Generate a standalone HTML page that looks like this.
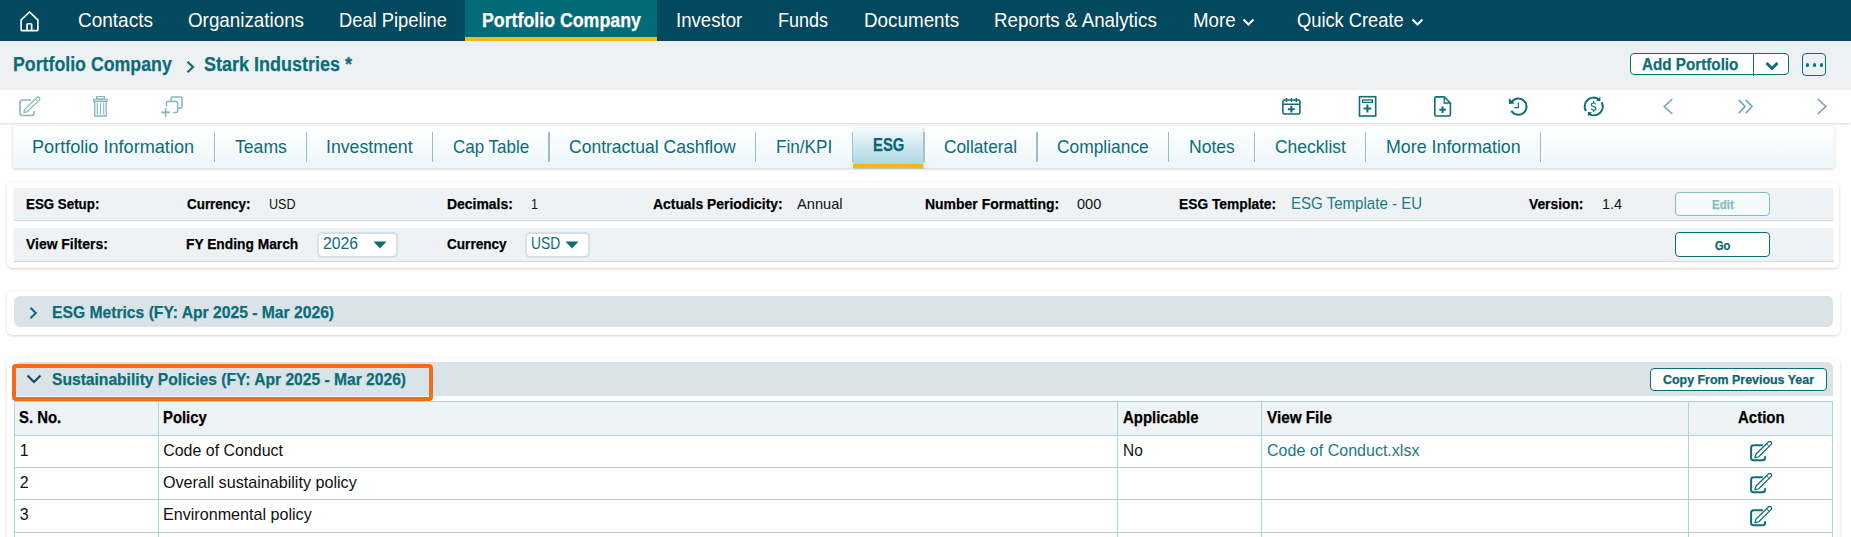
<!DOCTYPE html>
<html><head><meta charset="utf-8"><title>ESG</title>
<style>
html,body{margin:0;padding:0;}
body{width:1851px;height:537px;overflow:hidden;position:relative;background:#fff;font-family:"Liberation Sans",sans-serif;}
.t{position:absolute;white-space:nowrap;transform-origin:0 0;}
.r{position:absolute;}
</style></head><body>
<div class="r" style="left:0px;top:0px;width:1851px;height:41px;background:#02485f"></div>
<div class="r" style="left:465px;top:0px;width:192px;height:41px;background:#026b78"></div>
<div class="r" style="left:465px;top:37px;width:192px;height:5px;background:#fbb515"></div>
<svg class="r" style="left:14px;top:6px" width="32" height="30" viewBox="14 6 32 30"><path d="M29.5 12 L37.85 19.8 V29.65 Q37.85 30.65 36.85 30.65 H22.15 Q21.15 30.65 21.15 29.65 V19.8 Z" fill="none" stroke="#fff" stroke-width="1.7" stroke-linejoin="round"/><path d="M27.05 30.65 V24.75 Q27.05 23.75 28.05 23.75 H30.65 Q31.65 23.75 31.65 24.75 V30.65" fill="none" stroke="#fff" stroke-width="1.7"/></svg>
<div class="t" style="left:78.00px;top:9px;font-size:19.39px;line-height:22px;color:#fff;transform:scaleX(0.9802);">Contacts</div>
<div class="t" style="left:187.70px;top:9px;font-size:19.39px;line-height:22px;color:#fff;transform:scaleX(0.9704);">Organizations</div>
<div class="t" style="left:339.00px;top:9px;font-size:19.39px;line-height:22px;color:#fff;transform:scaleX(0.9452);">Deal Pipeline</div>
<div class="t" style="left:482.10px;top:9px;font-size:19.91px;line-height:22px;color:#fff;font-weight:700;-webkit-text-stroke:0.25px;transform:scaleX(0.8923);">Portfolio Company</div>
<div class="t" style="left:676.00px;top:9px;font-size:19.39px;line-height:22px;color:#fff;transform:scaleX(0.9613);">Investor</div>
<div class="t" style="left:778.00px;top:9px;font-size:19.39px;line-height:22px;color:#fff;transform:scaleX(0.9279);">Funds</div>
<div class="t" style="left:863.70px;top:9px;font-size:19.39px;line-height:22px;color:#fff;transform:scaleX(0.9717);">Documents</div>
<div class="t" style="left:994.30px;top:9px;font-size:19.39px;line-height:22px;color:#fff;transform:scaleX(0.9690);">Reports &amp; Analytics</div>
<div class="t" style="left:1192.60px;top:9px;font-size:19.39px;line-height:22px;color:#fff;transform:scaleX(0.9644);">More</div>
<div class="t" style="left:1297.30px;top:9px;font-size:19.39px;line-height:22px;color:#fff;transform:scaleX(0.9431);">Quick Create</div>
<svg class="r" style="left:1242.0px;top:17px" width="13" height="11" viewBox="0 0 13 11"><path d="M1.5 2.5 L6.5 7.5 L11.5 2.5" fill="none" stroke="#fff" stroke-width="2"/></svg>
<svg class="r" style="left:1411.0px;top:17px" width="13" height="11" viewBox="0 0 13 11"><path d="M1.5 2.5 L6.5 7.5 L11.5 2.5" fill="none" stroke="#fff" stroke-width="2"/></svg>
<div class="r" style="left:0px;top:41px;width:1851px;height:49px;background:#edf1f4"></div>
<div class="t" style="left:13.20px;top:53px;font-size:19.91px;line-height:22px;color:#0c6c78;font-weight:700;-webkit-text-stroke:0.25px;transform:scaleX(0.8918);">Portfolio Company</div>
<svg class="r" style="left:185px;top:60px" width="11" height="14" viewBox="0 0 11 14"><path d="M2.5 1.8 L8 7 L2.5 12.2" fill="none" stroke="#0c6c78" stroke-width="2.2"/></svg>
<div class="t" style="left:204.00px;top:53px;font-size:19.91px;line-height:22px;color:#0c6c78;font-weight:700;-webkit-text-stroke:0.25px;transform:scaleX(0.9038);">Stark Industries *</div>
<div class="r" style="left:1630px;top:53px;width:157px;height:20px;border:1.5px solid #0c6c78;border-radius:4px;background:#fff"></div>
<div class="r" style="left:1753px;top:53px;width:1.3px;height:23px;background:#0c6c78"></div>
<div class="t" style="left:1641.60px;top:55px;font-size:16.86px;line-height:19px;color:#0c6c78;font-weight:700;-webkit-text-stroke:0.25px;transform:scaleX(0.9030);">Add Portfolio</div>
<svg class="r" style="left:1764px;top:60px" width="16" height="12" viewBox="0 0 16 12"><path d="M2.5 3 L8 8.5 L13.5 3" fill="none" stroke="#0c6c78" stroke-width="3"/></svg>
<div class="r" style="left:1802px;top:53px;width:22px;height:21px;border:1.5px solid #0c6c78;border-radius:4px"></div>
<div class="r" style="left:1805.6px;top:62.8px;width:3.8px;height:3.8px;border-radius:50%;background:#0c6c78"></div>
<div class="r" style="left:1812.6px;top:62.8px;width:3.8px;height:3.8px;border-radius:50%;background:#0c6c78"></div>
<div class="r" style="left:1819.6px;top:62.8px;width:3.8px;height:3.8px;border-radius:50%;background:#0c6c78"></div>
<div class="r" style="left:0px;top:90px;width:1851px;height:33px;background:#fff;box-shadow:0 1px 2px rgba(0,0,0,0.16)"></div>
<svg class="r" style="left:0;top:90px" width="200" height="32" viewBox="0 90 200 32">
<path d="M31 100 H22.5 Q20 100 20 102.5 V113 Q20 115.5 22.5 115.5 H31.5 Q34 115.5 34 113 V111" fill="none" stroke="#86b8bd" stroke-width="1.6"/>
<path d="M23.8 112.7 L24.7 109.4 L37.1 97.5 A1.7 1.7 0 0 1 39.5 99.9 L27.1 111.8 Z" fill="none" stroke="#86b8bd" stroke-width="1.2" stroke-linejoin="round"/>
<path d="M35.3 99.3 L37.7 101.7" stroke="#86b8bd" stroke-width="1"/>
<rect x="96.6" y="96.6" width="7.8" height="2.4" fill="none" stroke="#86b8bd" stroke-width="1.2"/>
<rect x="93.8" y="99.2" width="13.4" height="2.3" fill="#c5dde0" stroke="#86b8bd" stroke-width="1.1"/>
<path d="M94.8 101.5 V116 H106.2 V101.5" fill="none" stroke="#86b8bd" stroke-width="1.3"/>
<path d="M97.3 103.2 V114.6 M100.5 103.2 V114.6 M103.7 103.2 V114.6" stroke="#86b8bd" stroke-width="1.1"/>
<path d="M171 101.5 V98.3 Q171 97 172.3 97 H180.7 Q182 97 182 98.3 V106.7 Q182 108 180.7 108 H178" fill="none" stroke="#86b8bd" stroke-width="1.5"/>
<path d="M166.5 106 V102.8 Q166.5 101.5 167.8 101.5 H176.3 Q177.6 101.5 177.6 102.8 V111.2 Q177.6 112.5 176.3 112.5 H173.3" fill="none" stroke="#86b8bd" stroke-width="1.5"/>
<path d="M165.6 108 V116.8 M161.2 112.4 H170" stroke="#86b8bd" stroke-width="1.6"/>
</svg>
<svg class="r" style="left:1270px;top:90px" width="570" height="32" viewBox="1270 90 570 32">
<rect x="1282.9" y="100" width="17" height="14" rx="1.6" fill="none" stroke="#0e6e79" stroke-width="1.6"/>
<path d="M1282.9 104.2 H1299.9 M1286.5 98 V102 M1291.4 98 V102 M1296.3 98 V102" stroke="#0e6e79" stroke-width="1.4"/>
<path d="M1291.4 105.8 V112.5 M1288 109.2 H1294.8" stroke="#0e6e79" stroke-width="1.9"/>
<rect x="1359.5" y="96.7" width="16.2" height="19.3" fill="none" stroke="#0e6e79" stroke-width="1.6"/>
<rect x="1362.6" y="100" width="9.8" height="2.4" fill="none" stroke="#0e6e79" stroke-width="1.3"/>
<path d="M1367.4 104.5 V112.5 M1363.5 108.5 H1371.3" stroke="#0e6e79" stroke-width="2"/>
<path d="M1434.8 98.3 Q1434.8 96.9 1436.2 96.9 H1444.2 L1450.4 103 V114.6 Q1450.4 116 1449 116 H1436.2 Q1434.8 116 1434.8 114.6 Z" fill="none" stroke="#0e6e79" stroke-width="1.6" stroke-linejoin="round"/>
<path d="M1444.2 96.9 V103 H1450.4" fill="none" stroke="#0e6e79" stroke-width="1.3"/>
<path d="M1442.6 106.4 V113 M1439.3 109.7 H1445.9" stroke="#0e6e79" stroke-width="1.9"/>
<path d="M1511.8 101.95 A8.1 8.1 0 1 1 1511.4 110.65" fill="none" stroke="#0e6e79" stroke-width="2"/>
<path d="M1508.9 97.9 L1508.9 103.9 L1514.6 103.4 Z" fill="#0e6e79"/>
<path d="M1518.4 102.4 V107.7 H1514.3" fill="none" stroke="#0e6e79" stroke-width="1.2"/>
<path d="M1586 111 A8.8 8.8 0 0 1 1598.5 99.2" fill="none" stroke="#0e6e79" stroke-width="2.1"/>
<path d="M1601.6 102.2 A8.8 8.8 0 0 1 1589 113.8" fill="none" stroke="#0e6e79" stroke-width="2.1"/>
<path d="M1600.3 96.8 L1600.3 101.2 L1596.2 100.8 Z" fill="#0e6e79"/>
<path d="M1587.9 111.8 L1587.9 116.2 L1592 112.6 Z" fill="#0e6e79"/>
<path d="M1595.7 104.4 Q1595.2 103 1593.6 103 Q1591.4 103 1591.4 104.8 Q1591.4 106.3 1593.6 106.6 Q1595.9 106.9 1595.9 108.4 Q1595.9 110.2 1593.6 110.2 Q1591.9 110.2 1591.3 108.8 M1593.6 101 V103 M1593.6 110.2 V112" fill="none" stroke="#0e6e79" stroke-width="1.2"/>
<path d="M1672.4 99 L1664.3 106.5 L1672.4 114" fill="none" stroke="#7ba4ae" stroke-width="1.7"/>
<path d="M1738.8 99.8 L1745 106.5 L1738.8 113.2 M1745.8 99.8 L1752 106.5 L1745.8 113.2" fill="none" stroke="#6cb2b7" stroke-width="1.8"/>
<path d="M1817.8 99 L1825.8 106.5 L1817.8 114" fill="none" stroke="#7ba4ae" stroke-width="1.7"/>
</svg>
<div class="r" style="left:13px;top:126px;width:1821px;height:42px;background:linear-gradient(#ffffff,#edf6fb);box-shadow:0 1px 3px rgba(0,0,0,0.2)"></div>
<div class="t" style="left:32.40px;top:136px;font-size:18.60px;line-height:21px;color:#0c6c78;transform:scaleX(0.9739);">Portfolio Information</div>
<div class="t" style="left:234.60px;top:136px;font-size:18.60px;line-height:21px;color:#0c6c78;transform:scaleX(0.9475);">Teams</div>
<div class="t" style="left:326.40px;top:136px;font-size:18.60px;line-height:21px;color:#0c6c78;transform:scaleX(0.9519);">Investment</div>
<div class="t" style="left:452.80px;top:136px;font-size:18.60px;line-height:21px;color:#0c6c78;transform:scaleX(0.9134);">Cap Table</div>
<div class="t" style="left:568.80px;top:136px;font-size:18.60px;line-height:21px;color:#0c6c78;transform:scaleX(0.9427);">Contractual Cashflow</div>
<div class="t" style="left:775.70px;top:136px;font-size:18.60px;line-height:21px;color:#0c6c78;transform:scaleX(0.9231);">Fin/KPI</div>
<div class="t" style="left:944.40px;top:136px;font-size:18.60px;line-height:21px;color:#0c6c78;transform:scaleX(0.9292);">Collateral</div>
<div class="t" style="left:1057.40px;top:136px;font-size:18.60px;line-height:21px;color:#0c6c78;transform:scaleX(0.9348);">Compliance</div>
<div class="t" style="left:1189.20px;top:136px;font-size:18.60px;line-height:21px;color:#0c6c78;transform:scaleX(0.9427);">Notes</div>
<div class="t" style="left:1274.50px;top:136px;font-size:18.60px;line-height:21px;color:#0c6c78;transform:scaleX(0.9396);">Checklist</div>
<div class="t" style="left:1385.80px;top:136px;font-size:18.60px;line-height:21px;color:#0c6c78;transform:scaleX(0.9581);">More Information</div>
<div class="r" style="left:214.0px;top:132px;width:1.3px;height:30px;background:#9fbcc4"></div>
<div class="r" style="left:306.0px;top:132px;width:1.3px;height:30px;background:#9fbcc4"></div>
<div class="r" style="left:431.8px;top:132px;width:1.3px;height:30px;background:#9fbcc4"></div>
<div class="r" style="left:548.4px;top:132px;width:1.3px;height:30px;background:#9fbcc4"></div>
<div class="r" style="left:754.9px;top:132px;width:1.3px;height:30px;background:#9fbcc4"></div>
<div class="r" style="left:1036.4px;top:132px;width:1.3px;height:30px;background:#9fbcc4"></div>
<div class="r" style="left:1168.1px;top:132px;width:1.3px;height:30px;background:#9fbcc4"></div>
<div class="r" style="left:1253.8px;top:132px;width:1.3px;height:30px;background:#9fbcc4"></div>
<div class="r" style="left:1364.7px;top:132px;width:1.3px;height:30px;background:#9fbcc4"></div>
<div class="r" style="left:1539.7px;top:132px;width:1.3px;height:30px;background:#9fbcc4"></div>
<div class="r" style="left:853px;top:127px;width:70px;height:41px;background:linear-gradient(#f6fbfc,#a4d2e2);box-shadow:1px 1px 1px rgba(0,0,0,0.12)"></div>
<div class="r" style="left:851.8px;top:132px;width:1.4px;height:30px;background:#a9c3ca"></div>
<div class="r" style="left:923.3px;top:132px;width:1.6px;height:30px;background:#a9c3ca"></div>
<div class="r" style="left:853px;top:164px;width:70px;height:4px;background:#fbb515"></div>
<div class="t" style="left:873.00px;top:134px;font-size:18.60px;line-height:21px;color:#0b6470;font-weight:700;-webkit-text-stroke:0.25px;transform:scaleX(0.7968);">ESG</div>
<div class="r" style="left:7px;top:182px;width:1832px;height:86px;background:#fff;border-radius:5px;box-shadow:0 1px 3px rgba(0,0,0,0.17)"></div>
<div class="r" style="left:14px;top:188px;width:1819px;height:32px;background:#eef2f5;box-shadow:0 1px 1px rgba(0,0,0,0.15)"></div>
<div class="r" style="left:14px;top:228px;width:1819px;height:33px;background:#eef2f5;box-shadow:0 1px 1px rgba(0,0,0,0.15)"></div>
<div class="t" style="left:26.35px;top:195px;font-size:15.55px;line-height:17px;color:#000;font-weight:700;-webkit-text-stroke:0.25px;transform:scaleX(0.8575);">ESG Setup:</div>
<div class="t" style="left:186.80px;top:195px;font-size:15.55px;line-height:17px;color:#000;font-weight:700;-webkit-text-stroke:0.25px;transform:scaleX(0.8631);">Currency:</div>
<div class="t" style="left:268.80px;top:195px;font-size:15.55px;line-height:17px;color:#111;transform:scaleX(0.8073);">USD</div>
<div class="t" style="left:446.70px;top:195px;font-size:15.55px;line-height:17px;color:#000;font-weight:700;-webkit-text-stroke:0.25px;transform:scaleX(0.8969);">Decimals:</div>
<div class="t" style="left:530.50px;top:195px;font-size:15.55px;line-height:17px;color:#111;transform:scaleX(0.8096);">1</div>
<div class="t" style="left:652.90px;top:195px;font-size:15.55px;line-height:17px;color:#000;font-weight:700;-webkit-text-stroke:0.25px;transform:scaleX(0.8934);">Actuals Periodicity:</div>
<div class="t" style="left:796.60px;top:195px;font-size:15.55px;line-height:17px;color:#111;transform:scaleX(0.9417);">Annual</div>
<div class="t" style="left:924.80px;top:195px;font-size:15.55px;line-height:17px;color:#000;font-weight:700;-webkit-text-stroke:0.25px;transform:scaleX(0.8980);">Number Formatting:</div>
<div class="t" style="left:1077.00px;top:195px;font-size:15.55px;line-height:17px;color:#111;transform:scaleX(0.9369);">000</div>
<div class="t" style="left:1179.20px;top:195px;font-size:15.55px;line-height:17px;color:#000;font-weight:700;-webkit-text-stroke:0.25px;transform:scaleX(0.8871);">ESG Template:</div>
<div class="t" style="left:1529.40px;top:195px;font-size:15.55px;line-height:17px;color:#000;font-weight:700;-webkit-text-stroke:0.25px;transform:scaleX(0.8866);">Version:</div>
<div class="t" style="left:1602.40px;top:195px;font-size:15.55px;line-height:17px;color:#111;transform:scaleX(0.9207);">1.4</div>
<div class="t" style="left:1291.10px;top:193px;font-size:17.18px;line-height:20px;color:#1a7a85;transform:scaleX(0.8764);">ESG Template - EU</div>
<div class="r" style="left:1675px;top:192px;width:95px;height:24px;box-sizing:border-box;border:1.3px solid #84bcc1;border-radius:4px;background:#f6f9fa"></div>
<div class="t" style="left:1711.60px;top:197px;font-size:12.94px;line-height:15px;color:#88bcc0;font-weight:700;-webkit-text-stroke:0.25px;transform:scaleX(0.8918);">Edit</div>
<div class="t" style="left:26.20px;top:235px;font-size:15.55px;line-height:17px;color:#000;font-weight:700;-webkit-text-stroke:0.25px;transform:scaleX(0.8957);">View Filters:</div>
<div class="t" style="left:186.40px;top:235px;font-size:15.55px;line-height:17px;color:#000;font-weight:700;-webkit-text-stroke:0.25px;transform:scaleX(0.8862);">FY Ending March</div>
<div class="r" style="left:316.5px;top:231.5px;width:81px;height:26px;box-sizing:border-box;border:2px solid #d5e0e5;border-radius:5px;background:#fff"></div>
<div class="t" style="left:323.10px;top:233px;font-size:17.18px;line-height:20px;color:#0c6c78;transform:scaleX(0.9156);">2026</div>
<svg class="r" style="left:373px;top:241px" width="14" height="8" viewBox="0 0 14 8"><path d="M0.5 0.5 H13.5 L7 7.5 Z" fill="#0c6c78"/></svg>
<div class="t" style="left:446.70px;top:235px;font-size:15.55px;line-height:17px;color:#000;font-weight:700;-webkit-text-stroke:0.25px;transform:scaleX(0.8743);">Currency</div>
<div class="r" style="left:524.5px;top:231.5px;width:65px;height:26px;box-sizing:border-box;border:2px solid #d5e0e5;border-radius:5px;background:#fff"></div>
<div class="t" style="left:531.10px;top:234px;font-size:17.01px;line-height:19px;color:#0c6c78;transform:scaleX(0.8104);">USD</div>
<svg class="r" style="left:565px;top:241px" width="14" height="8" viewBox="0 0 14 8"><path d="M0.5 0.5 H13.5 L7 7.5 Z" fill="#0c6c78"/></svg>
<div class="r" style="left:1675px;top:232px;width:95px;height:25px;box-sizing:border-box;border:1.3px solid #0c6c78;border-radius:4px;background:#fff"></div>
<div class="t" style="left:1714.80px;top:238px;font-size:12.94px;line-height:15px;color:#0b6470;font-weight:700;-webkit-text-stroke:0.25px;transform:scaleX(0.8568);">Go</div>
<div class="r" style="left:7px;top:291px;width:1833px;height:44px;background:#fff;border-radius:5px;box-shadow:0 1px 3px rgba(0,0,0,0.17)"></div>
<div class="r" style="left:14px;top:296px;width:1819px;height:31px;background:#d9e3e8;border-radius:6px"></div>
<svg class="r" style="left:28px;top:306px" width="11" height="14" viewBox="0 0 11 14"><path d="M2.5 1.8 L7.8 7 L2.5 12.2" fill="none" stroke="#0c6c78" stroke-width="2"/></svg>
<div class="t" style="left:52.40px;top:302px;font-size:17.18px;line-height:20px;color:#0c6c78;font-weight:700;-webkit-text-stroke:0.25px;transform:scaleX(0.9123);">ESG Metrics (FY: Apr 2025 - Mar 2026)</div>
<div class="r" style="left:7px;top:358px;width:1833px;height:200px;background:#fff;border-radius:5px;box-shadow:0 1px 3px rgba(0,0,0,0.17)"></div>
<div class="r" style="left:14px;top:362px;width:1819px;height:34px;background:#d9e3e8;border-radius:6px 6px 0 0"></div>
<svg class="r" style="left:25px;top:373px" width="18" height="13" viewBox="0 0 18 13"><path d="M2.5 2.5 L9 9 L15.5 2.5" fill="none" stroke="#0b4f60" stroke-width="2.2"/></svg>
<div class="t" style="left:51.80px;top:369px;font-size:17.18px;line-height:20px;color:#0c6c78;font-weight:700;-webkit-text-stroke:0.25px;transform:scaleX(0.9093);">Sustainability Policies (FY: Apr 2025 - Mar 2026)</div>
<div class="r" style="left:12px;top:364px;width:421px;height:37px;box-sizing:border-box;border:4px solid #f26b1d;border-radius:4px"></div>
<div class="r" style="left:1650px;top:368px;width:177px;height:23px;box-sizing:border-box;border:1.3px solid #0c6c78;border-radius:4px;background:#fff"></div>
<div class="t" style="left:1662.80px;top:373px;font-size:12.64px;line-height:14px;color:#0b6470;font-weight:700;-webkit-text-stroke:0.25px;transform:scaleX(0.9843);">Copy From Previous Year</div>
<div class="r" style="left:14px;top:401px;width:1819px;height:34px;background:#eef3f5"></div>
<div class="r" style="left:14px;top:401px;width:1819px;height:1px;background:#b3d2d6"></div>
<div class="r" style="left:14px;top:435px;width:1819px;height:1px;background:#b3d2d6"></div>
<div class="r" style="left:14px;top:467px;width:1819px;height:1px;background:#b3d2d6"></div>
<div class="r" style="left:14px;top:499px;width:1819px;height:1px;background:#b3d2d6"></div>
<div class="r" style="left:14px;top:532px;width:1819px;height:1px;background:#b3d2d6"></div>
<div class="r" style="left:14px;top:401px;width:1px;height:140px;background:#b3d2d6"></div>
<div class="r" style="left:158px;top:401px;width:1px;height:140px;background:#b3d2d6"></div>
<div class="r" style="left:1117px;top:401px;width:1px;height:140px;background:#b3d2d6"></div>
<div class="r" style="left:1261px;top:401px;width:1px;height:140px;background:#b3d2d6"></div>
<div class="r" style="left:1688px;top:401px;width:1px;height:140px;background:#b3d2d6"></div>
<div class="r" style="left:1832px;top:401px;width:1px;height:140px;background:#b3d2d6"></div>
<div class="t" style="left:19.20px;top:409px;font-size:15.84px;line-height:17px;color:#000;font-weight:700;-webkit-text-stroke:0.25px;transform:scaleX(0.9423);">S. No.</div>
<div class="t" style="left:163.20px;top:409px;font-size:15.84px;line-height:17px;color:#000;font-weight:700;-webkit-text-stroke:0.25px;transform:scaleX(0.9386);">Policy</div>
<div class="t" style="left:1122.70px;top:409px;font-size:15.84px;line-height:17px;color:#000;font-weight:700;-webkit-text-stroke:0.25px;transform:scaleX(0.9438);">Applicable</div>
<div class="t" style="left:1266.80px;top:409px;font-size:15.84px;line-height:17px;color:#000;font-weight:700;-webkit-text-stroke:0.25px;transform:scaleX(0.9645);">View File</div>
<div class="t" style="left:1737.50px;top:409px;font-size:15.84px;line-height:17px;color:#000;font-weight:700;-webkit-text-stroke:0.25px;transform:scaleX(0.9477);">Action</div>
<div class="t" style="left:19.80px;top:442px;font-size:15.96px;line-height:17px;color:#111;">1</div>
<div class="t" style="left:163.20px;top:442px;font-size:15.96px;line-height:17px;color:#111;">Code of Conduct</div>
<div class="t" style="left:1122.70px;top:442px;font-size:15.96px;line-height:17px;color:#111;transform:scaleX(0.9658);">No</div>
<div class="t" style="left:1266.80px;top:442px;font-size:15.96px;line-height:17px;color:#1a7a85;transform:scaleX(1.0053);">Code of Conduct.xlsx</div>
<svg class="r" style="left:1749px;top:441.0px" width="24" height="22" viewBox="0 0 24 22"><path d="M13.8 4.2 H4.6 Q2.1 4.2 2.1 6.7 V16.8 Q2.1 19.3 4.6 19.3 H13.5 Q16 19.3 16 16.8 V15.3" fill="none" stroke="#0e6e79" stroke-width="2"/><path d="M5.9 16.8 L7.07 12.99 L19.31 0.97 A1.9 1.9 0 0 1 21.97 3.69 L9.73 15.71 Z" fill="none" stroke="#0e6e79" stroke-width="1.2" stroke-linejoin="round"/><path d="M17.5 2.7 L20.2 5.4" stroke="#0e6e79" stroke-width="1"/></svg>
<div class="t" style="left:19.80px;top:474px;font-size:15.96px;line-height:17px;color:#111;">2</div>
<div class="t" style="left:163.20px;top:474px;font-size:15.96px;line-height:17px;color:#111;transform:scaleX(1.0115);">Overall sustainability policy</div>
<svg class="r" style="left:1749px;top:473.4px" width="24" height="22" viewBox="0 0 24 22"><path d="M13.8 4.2 H4.6 Q2.1 4.2 2.1 6.7 V16.8 Q2.1 19.3 4.6 19.3 H13.5 Q16 19.3 16 16.8 V15.3" fill="none" stroke="#0e6e79" stroke-width="2"/><path d="M5.9 16.8 L7.07 12.99 L19.31 0.97 A1.9 1.9 0 0 1 21.97 3.69 L9.73 15.71 Z" fill="none" stroke="#0e6e79" stroke-width="1.2" stroke-linejoin="round"/><path d="M17.5 2.7 L20.2 5.4" stroke="#0e6e79" stroke-width="1"/></svg>
<div class="t" style="left:19.80px;top:506px;font-size:15.96px;line-height:17px;color:#111;">3</div>
<div class="t" style="left:163.20px;top:506px;font-size:15.96px;line-height:17px;color:#111;transform:scaleX(1.0104);">Environmental policy</div>
<svg class="r" style="left:1749px;top:505.8px" width="24" height="22" viewBox="0 0 24 22"><path d="M13.8 4.2 H4.6 Q2.1 4.2 2.1 6.7 V16.8 Q2.1 19.3 4.6 19.3 H13.5 Q16 19.3 16 16.8 V15.3" fill="none" stroke="#0e6e79" stroke-width="2"/><path d="M5.9 16.8 L7.07 12.99 L19.31 0.97 A1.9 1.9 0 0 1 21.97 3.69 L9.73 15.71 Z" fill="none" stroke="#0e6e79" stroke-width="1.2" stroke-linejoin="round"/><path d="M17.5 2.7 L20.2 5.4" stroke="#0e6e79" stroke-width="1"/></svg>
</body></html>
